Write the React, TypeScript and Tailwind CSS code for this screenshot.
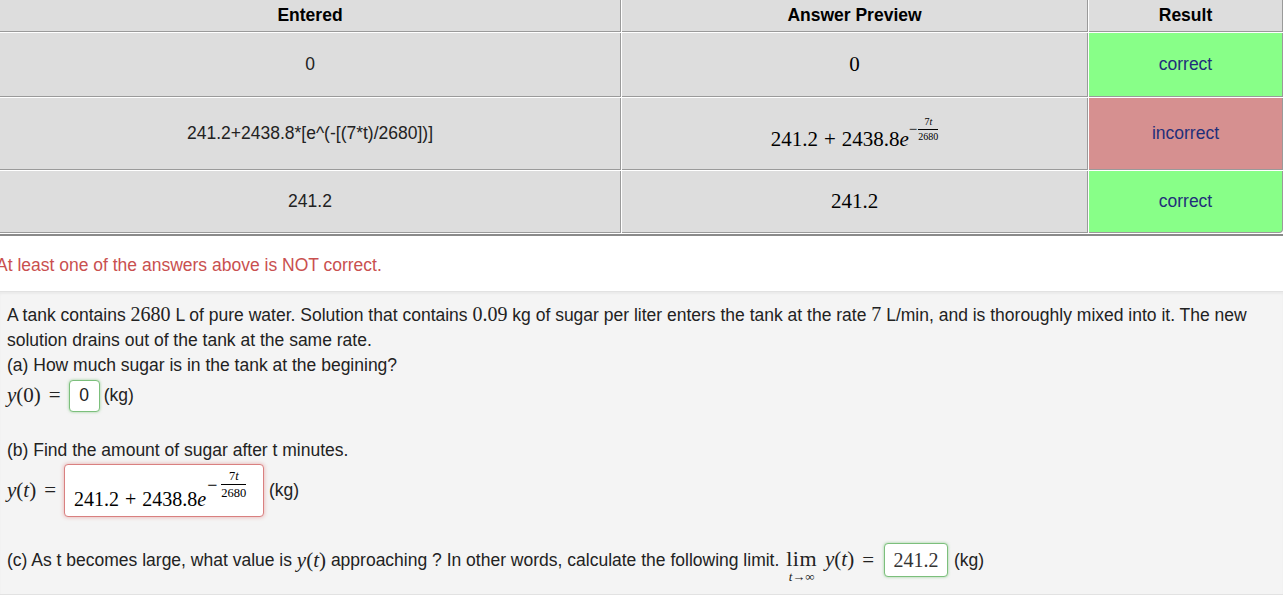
import React from 'react';

const sans = "font-['Liberation_Sans',Arial,sans-serif]";

function Frac({ num, den }: { num: React.ReactNode; den: React.ReactNode }) {
  return (
    <span className="inline-flex flex-col items-center leading-none">
      <span className="px-[2px] pb-[2px]">{num}</span>
      <span className="w-full border-t border-black pt-[2px] text-center">{den}</span>
    </span>
  );
}

function M({ children }: { children: React.ReactNode }) {
  return <span className="font-['Liberation_Serif',serif] text-[20px]">{children}</span>;
}

function Yof({ arg }: { arg: React.ReactNode }) {
  return (
    <span className="font-['Liberation_Serif',serif] text-[21px]">
      <i>y</i>({arg})
    </span>
  );
}

function Eq() {
  return <span className="mx-[8px] font-['Liberation_Serif',serif] text-[21px]">=</span>;
}

function Cell({ children, className }: { children: React.ReactNode; className: string }) {
  return (
    <div className={`flex items-center justify-center border-b border-r border-[#9a9a9a] ${className}`}>
      {children}
    </div>
  );
}

function PreviewExpr() {
  return (
    <span className="inline-flex items-start font-['Liberation_Serif',serif] text-[21px] text-black">
      <span className="mt-[12px]">
        241.2<span className="mx-[6px]">+</span>2438.8<i>e</i>
      </span>
      <span className="mt-[5px] inline-flex items-center text-[10px]">
        <span className="mr-[1px] text-[15px] leading-none">−</span>
        <Frac num={<span>7<i>t</i></span>} den="2680" />
      </span>
    </span>
  );
}

export default function App() {
  const correct = 'bg-[#88ff88] text-[#1f2f7a]';
  return (
    <div className={`${sans} min-h-[601px] bg-white text-[17.5px] text-[#222]`}>
      <div className="grid grid-cols-[621px_466px_1fr] gap-px bg-white">
        <Cell className="h-[32px] bg-[#dddddd] font-bold text-black">Entered</Cell>
        <Cell className="h-[32px] bg-[#dddddd] font-bold text-black">Answer Preview</Cell>
        <Cell className="h-[32px] bg-[#dddddd] font-bold text-black">Result</Cell>

        <Cell className="h-[64px] bg-[#dddddd]">0</Cell>
        <Cell className="h-[64px] bg-[#dddddd]">
          <span className="font-['Liberation_Serif',serif] text-[21px] text-black">0</span>
        </Cell>
        <Cell className={`h-[64px] ${correct}`}>correct</Cell>

        <Cell className="h-[72px] bg-[#dddddd]">241.2+2438.8*[e^(-[(7*t)/2680])]</Cell>
        <Cell className="h-[72px] bg-[#dddddd]">
          <PreviewExpr />
        </Cell>
        <Cell className="h-[72px] bg-[#d69090] text-[#1f2f7a]">incorrect</Cell>

        <Cell className="h-[62px] bg-[#dddddd]">241.2</Cell>
        <Cell className="h-[62px] bg-[#dddddd]">
          <span className="font-['Liberation_Serif',serif] text-[21px] text-black">241.2</span>
        </Cell>
        <Cell className={`h-[62px] rounded-br-[4px] ${correct}`}>correct</Cell>
      </div>
      <div className="mt-px h-[2px] bg-[#8a8a8a]" />

      <div className="-ml-[4px] h-[55px] pt-[19px] leading-[20px] text-[#c9504f]">
        At least one of the answers above is NOT correct.
      </div>

      <div className="border-b border-t border-[#e2e2e2] bg-[#f4f4f4] px-[7px] pb-[16px] pt-[10px] leading-[25px] shadow-[inset_0_2px_2px_rgba(0,0,0,0.04)]">
        <div className="whitespace-nowrap">
          A tank contains <M>2680</M> L of pure water. Solution that contains <M>0.09</M> kg of sugar per liter
          enters the tank at the rate <M>7</M> L/min, and is thoroughly mixed into it. The new
        </div>
        <div>solution drains out of the tank at the same rate.</div>
        <div>(a) How much sugar is in the tank at the begining?</div>
        <div className="flex h-[35px] items-center">
          <Yof arg="0" />
          <Eq />
          <span className="flex h-[32px] w-[31px] items-center justify-center rounded-[4px] border border-[#7cbf7c] bg-white shadow-[0_0_3px_rgba(92,184,92,0.6)]">
            0
          </span>
          <span className="ml-[4px]">(kg)</span>
        </div>
        <div className="h-[25px]" />
        <div>(b) Find the amount of sugar after t minutes.</div>
        <div className="flex h-[54px] items-center">
          <Yof arg={<i>t</i>} />
          <Eq />
          <span className="flex h-[53px] w-[200px] items-end rounded-[4px] border border-[#d98080] bg-white pb-[6px] pl-[9px] shadow-[0_0_4px_rgba(217,83,79,0.45)]">
            <span className="font-['Liberation_Serif',serif] text-[20px] leading-[22px] text-black">
              241.2<span className="mx-[6px]">+</span>2438.8<i>e</i>
            </span>
            <span className="mb-[12px] ml-[1px] inline-flex items-center self-start pt-[5px] font-['Liberation_Serif',serif] text-[12.5px] text-black">
              <span className="mr-[4px] text-[18px] leading-none">−</span>
              <Frac num={<span>7<i>t</i></span>} den="2680" />
            </span>
          </span>
          <span className="ml-[5px]">(kg)</span>
        </div>
        <div className="h-[25px]" />
        <div className="flex h-[36px] items-center whitespace-nowrap">
          <span>(c) As t becomes large, what value is&nbsp;</span>
          <Yof arg={<i>t</i>} />
          <span>&nbsp;approaching ? In other words, calculate the following limit.&nbsp;</span>
          <span className="ml-[2px] inline-flex flex-col items-center font-['Liberation_Serif',serif] leading-none">
            <span className="mt-[10px] text-[22px] tracking-[0.5px]">lim</span>
            <span className="text-[13px]">
              <i>t</i>→∞
            </span>
          </span>
          <span className="ml-[8px]">
            <Yof arg={<i>t</i>} />
          </span>
          <Eq />
          <span className="ml-[2px] flex h-[34px] w-[64px] items-center justify-center rounded-[4px] border border-[#7cbf7c] bg-white font-['Liberation_Serif',serif] text-[20px] text-[#333] shadow-[0_0_3px_rgba(92,184,92,0.6)]">
            241.2
          </span>
          <span className="ml-[6px]">(kg)</span>
        </div>
      </div>
    </div>
  );
}
